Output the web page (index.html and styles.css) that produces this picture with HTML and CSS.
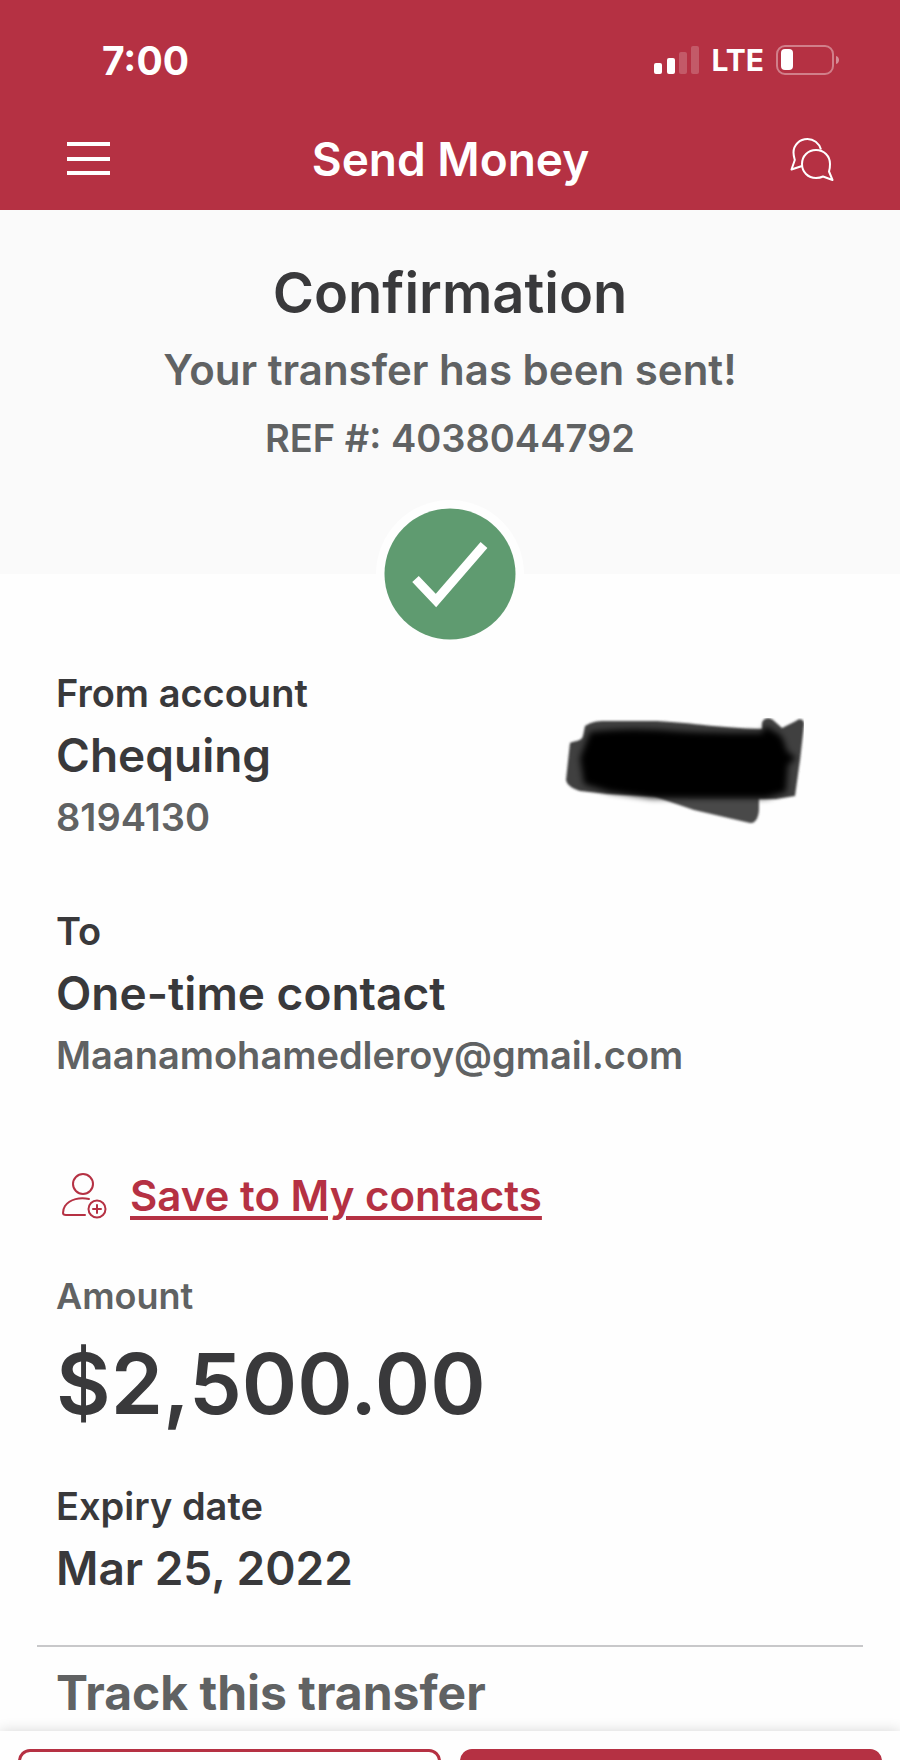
FILE: index.html
```html
<!DOCTYPE html>
<html lang="en">
<head>
<meta charset="utf-8">
<meta name="viewport" content="width=device-width, initial-scale=1">
<title>Send Money</title>
<link rel="stylesheet" href="styles.css">
</head>
<body>
<div class="screen">
  <header class="top">
    <div class="status">
      <span class="time">7:00</span>
      <div class="signals">
        <svg class="bars" width="46" height="30" viewBox="0 0 46 30" fill="#fff" aria-hidden="true">
          <rect x="0" y="18" width="8" height="11" rx="2"/>
          <rect x="13" y="13" width="8" height="16" rx="2"/>
          <rect x="25" y="7" width="8" height="22" rx="2" opacity=".2"/>
          <rect x="37" y="1" width="8" height="28" rx="2" opacity=".2"/>
        </svg>
        <span class="network">LTE</span>
        <svg class="battery" width="64" height="30" viewBox="0 0 64 30" aria-hidden="true">
          <rect x="1" y="1" width="56" height="28" rx="8" fill="none" stroke="#fff" stroke-width="2" opacity=".38"/>
          <rect x="5" y="4" width="12" height="21" rx="4" fill="#fff"/>
          <path d="M60 11c4 1 4 7 0 8z" fill="#fff" opacity=".45"/>
        </svg>
      </div>
    </div>
    <nav class="bar">
      <button class="icon-button" type="button" aria-label="Menu">
        <svg width="44" height="44" viewBox="0 0 44 44" stroke="#fff" stroke-width="4" aria-hidden="true"><path d="M0 7h43M0 22h43M0 36h43"/></svg>
      </button>
      <h1 class="title">Send Money</h1>
      <button class="icon-button" type="button" aria-label="Chat">
        <svg width="44" height="44" viewBox="0 0 44 44" fill="none" stroke="#fff" stroke-width="2" stroke-linejoin="round" aria-hidden="true">
          <path d="M31 12.500C29 6 23.500 2 17.500 2 9.500 2 3.500 8 3.500 15.500c0 3 .8 5.500 1.300 7.500L1.500 32.500 12 29"/>
          <path d="M40 27c0-8-6-14-14-14s-14 6-14 14 6 14 14 14c2.500 0 5-.5 7-1.500l9.500 3.500-3.500-8.500c.7-2 1-5 1-7.500z"/>
        </svg>
      </button>
    </nav>
  </header>

  <main class="content">
    <section class="hero">
      <h2 class="heading">Confirmation</h2>
      <p class="message">Your transfer has been sent!</p>
      <p class="reference">REF #: 4038044792</p>
      <svg class="badge" width="148" height="148" viewBox="0 0 148 148" role="img" aria-label="Sent">
        <circle cx="74" cy="74" r="74" fill="#fefefe"/>
        <circle cx="74" cy="74" r="65.500" fill="#5f9b70"/>
        <path d="M39.500 79 60 100.500 108 45" fill="none" stroke="#fff" stroke-width="9"/>
      </svg>
    </section>

    <section class="details">
      <div class="account">
        <div class="group">
          <p class="label">From account</p>
          <p class="value">Chequing</p>
          <p class="sub">8194130</p>
        </div>
        <svg class="scribble" width="242" height="108" viewBox="0 0 242 108" aria-hidden="true">
          <defs>
            <filter id="edge" x="-10%" y="-10%" width="120%" height="120%"><feGaussianBlur stdDeviation="1"/></filter>
            <filter id="core" x="-10%" y="-10%" width="120%" height="120%"><feGaussianBlur stdDeviation="3"/></filter>
          </defs>
          <g filter="url(#edge)">
            <path d="M88 77 132 92 188 105c6 1 9-7 9-14V72z" fill="#484848"/>
            <path d="M23 8c6-4 12-5 20-5h52c40 2 60 7 105 8V5c1-5 7-6 11-3l9 8 14-7c4-4 9-1 8 4l-4 35-5 36-19 3H130L85 78 45 76 18 73C12 71 5 68 4 62L8 25c4-2 12-2 13-7z" fill="#404040"/>
          </g>
          <g filter="url(#core)">
            <path d="M28 14c30-4 60-3 84-1 35 2 60 2 88 2l3-7 14 8c6 5 6 15 9 18l8 6-8 7-2 27-20 6-30 0H90L48 74 22 66 18 40z" fill="#000"/>
          </g>
        </svg>
      </div>
      <div class="group recipient">
        <p class="label">To</p>
        <p class="value">One-time contact</p>
        <p class="sub">Maanamohamedleroy@gmail.com</p>
      </div>
      <a class="save" href="#contacts">
        <svg width="46" height="48" viewBox="0 0 46 48" fill="none" stroke="#b53143" stroke-width="2" stroke-linecap="round" stroke-linejoin="round" aria-hidden="true">
          <circle cx="22" cy="12" r="10"/>
          <path d="M28 27C19 25 9 27 4 34c-2 3-2 5-2 7 0 1 1 2 3 2h19"/>
          <circle cx="36" cy="37" r="8.500"/>
          <path d="M36 33v8M32 37h8"/>
        </svg>
        <span class="save-text">Save to My contacts</span>
      </a>
      <div class="group amount">
        <p class="caption">Amount</p>
        <p class="total">$2,500.00</p>
      </div>
      <div class="group">
        <p class="label">Expiry date</p>
        <p class="value">Mar 25, 2022</p>
      </div>
    </section>
    <hr class="rule">
    <h2 class="track">Track this transfer</h2>
  </main>

  <footer class="actions">
    <button class="action outline" type="button" aria-label="Secondary action"></button>
    <button class="action solid" type="button" aria-label="Primary action"></button>
  </footer>
</div>
</body>
</html>
```
FILE: styles.css
```css
* { box-sizing: border-box; }
body {
  margin: 0;
  background: #fefefe;
  color: #39393b;
  font-family: Inter, "Liberation Sans", sans-serif;
  font-weight: 600;
}
h1, h2, p { margin: 0; font-weight: inherit; }
button { padding: 0; border: 0; background: none; }
svg { display: block; flex: none; }

.screen {
  display: flex;
  flex-direction: column;
  height: 100vh;
  overflow: hidden;
}

.top {
  flex: none;
  padding: 32px 60px 20px 67px;
  background: #b53143;
  color: #fff;
}
.status {
  display: flex;
  align-items: center;
  justify-content: space-between;
  height: 56px;
  padding-left: 35px;
}
.time { font-size: 39px; font-weight: 700; }
.signals { display: flex; align-items: center; gap: 12px; }
.network { font-size: 30px; font-weight: 700; line-height: 30px; }
.bar {
  display: flex;
  align-items: center;
  justify-content: space-between;
  height: 60px;
  margin-top: 41px;
  margin-bottom: 1px;
  padding-right: 6px;
}
.icon-button { cursor: pointer; }
.title { font-size: 46px; line-height: 60px; }

.content { flex: 1; min-height: 0; overflow: hidden; }
.hero {
  position: relative;
  height: 364px;
  padding-top: 47px;
  background: #fafafa;
  text-align: center;
}
.heading { font-size: 56px; line-height: 72px; }
.message { margin-top: 13px; font-size: 42px; line-height: 56px; color: #606263; }
.reference { margin-top: 12px; font-size: 38px; line-height: 56px; color: #606263; }
.badge {
  position: absolute;
  bottom: 0;
  left: 50%;
  transform: translate(-50%, 50%);
}

.details { padding: 91px 56px 0; }
.account { display: flex; justify-content: space-between; }
.scribble { margin: 53px 40px 0 0; }
.label, .sub { font-size: 38px; line-height: 56px; }
.value { font-size: 46px; line-height: 68px; }
.sub, .caption { color: #606263; }
.recipient { margin-top: 58px; }
.save {
  display: flex;
  align-items: center;
  gap: 23px;
  margin-top: 85px;
  padding-left: 5px;
  color: #b53143;
  font-size: 42px;
  line-height: 56px;
  text-decoration: none;
}
.save-text {
  text-decoration: underline;
  text-decoration-thickness: 4px;
  text-underline-offset: 5px;
}
.caption { font-size: 36px; line-height: 56px; }
.amount { margin-top: 44px; margin-bottom: 34px; }
.total { font-size: 84px; line-height: 120px; }
.rule {
  height: 2px;
  margin: 43px 37px 0;
  border: 0;
  background: #c8c8ca;
}
.track {
  padding: 18px 56px 0;
  color: #606263;
  font-size: 48px;
  font-weight: 700;
  line-height: 56px;
}

.actions {
  position: relative;
  display: flex;
  flex: none;
  gap: 19px;
  height: 29px;
  padding: 18px 18px 0;
  background: #fefefe;
  box-shadow: 0 0 14px rgba(0, 0, 0, .16);
}
.action { flex: 1; height: 88px; border: 3px solid #b53143; border-radius: 12px; }
.solid { background: #b53143; }
```
